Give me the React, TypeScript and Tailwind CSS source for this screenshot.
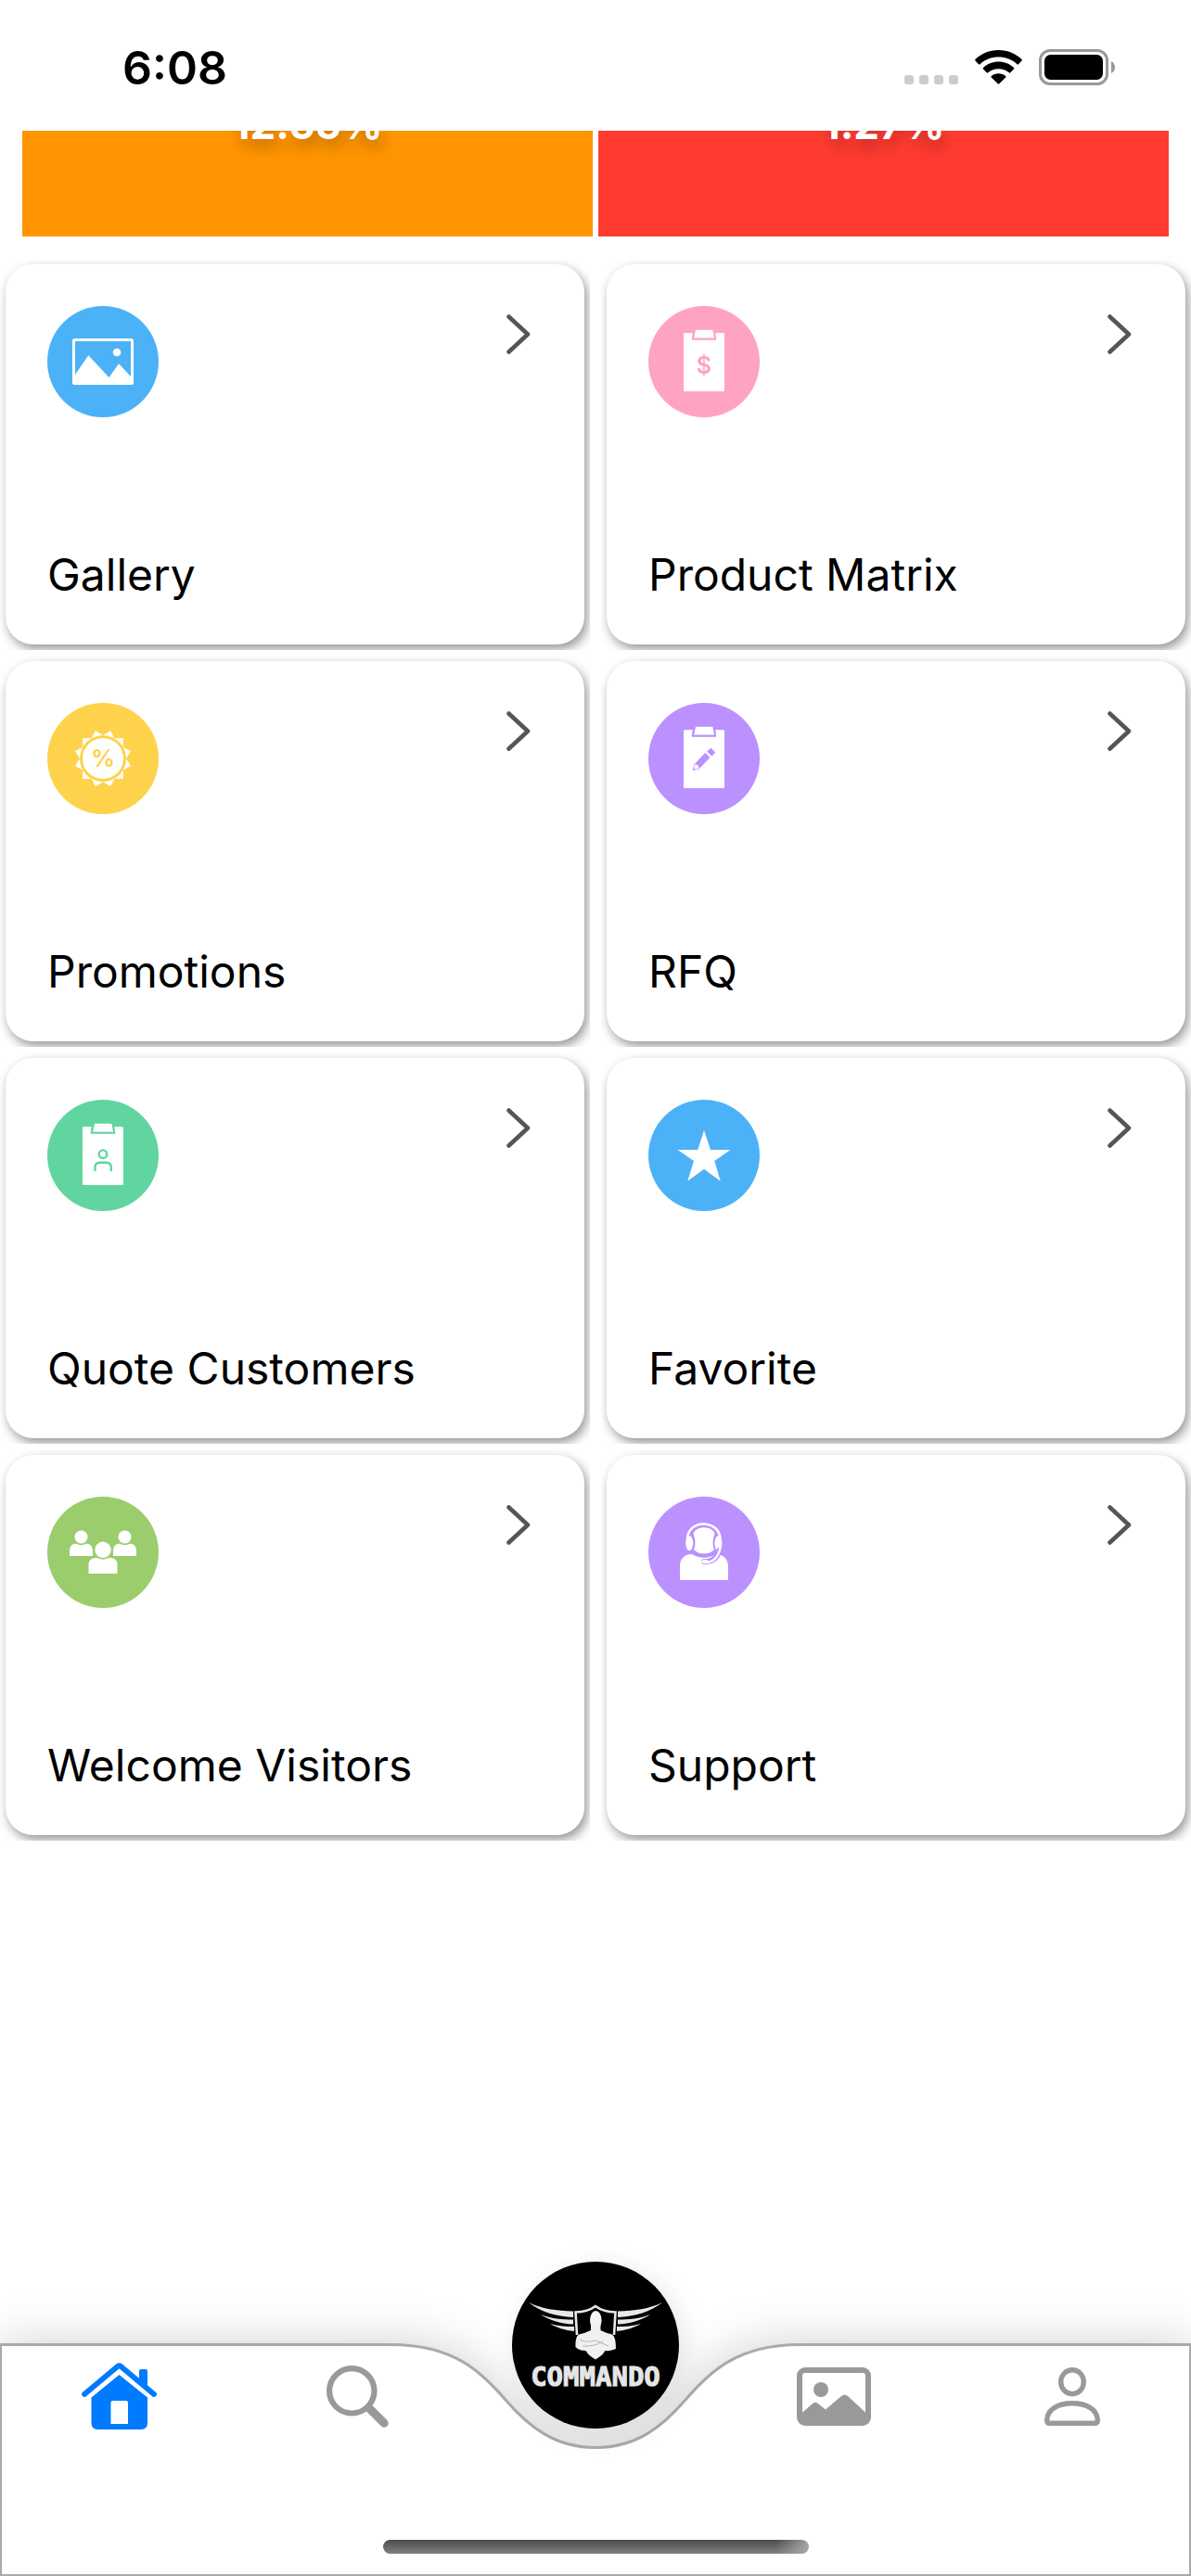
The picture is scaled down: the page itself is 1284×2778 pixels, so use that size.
import type { ReactNode } from "react";

const white = "#ffffff";

function Clipboard({ color, children }: { color: string; children: ReactNode }) {
  return (
    <>
      <rect x="38" y="29" width="44" height="63" rx="1.5" fill={white} />
      <path d="M47.8 28 H72.2 L73.4 36.8 H46.6 Z" fill={color} />
      <path d="M51 25.7 H69.3 L71 34.4 H49.2 Z" fill={white} />
      <g>{children}</g>
    </>
  );
}

function Person({
  x,
  y,
  r,
  w,
  h,
  color,
}: {
  x: number;
  y: number;
  r: number;
  w: number;
  h: number;
  color: string;
}) {
  const top = y + r;
  const left = x - w / 2;

  return (
    <>
      <path
        d={`M${left} ${top + h} V${top + 8} Q${left} ${top} ${left + 8} ${top} H${left + w - 8} Q${left + w} ${top} ${left + w} ${top + 8} V${top + h} Z`}
        fill={white}
      />
      <circle cx={x} cy={y} r={r + 1.8} fill={color} />
      <circle cx={x} cy={y} r={r} fill={white} />
    </>
  );
}

// 12 tips around the percent badge
const badgePoints = Array.from({ length: 24 }, (_, i) => {
  const radius = i % 2 === 0 ? 25 : 31;
  const angle = (i * 15 * Math.PI) / 180;

  return `${60 + radius * Math.sin(angle)},${60 - radius * Math.cos(angle)}`;
}).join(" ");

const tiles = [
  {
    label: "Gallery",
    color: "#4cb2f8",
    icon: (
      <>
        <rect x="27" y="35" width="66" height="50" rx="2.5" fill={white} />
        <path
          d="M30 38 H90 V76 L77 62.3 L66.5 77 L44.3 53.3 L30 74 Z"
          fill="#4cb2f8"
        />
        <circle cx="75" cy="50" r="4.3" fill={white} />
      </>
    ),
  },
  {
    label: "Product Matrix",
    color: "#fea3c4",
    icon: (
      <Clipboard color="#fea3c4">
        <text
          x="60"
          y="73"
          textAnchor="middle"
          fontSize="25"
          fontWeight="600"
          fill="#fea3c4"
        >
          $
        </text>
      </Clipboard>
    ),
  },
  {
    label: "Promotions",
    color: "#fed24b",
    icon: (
      <>
        <polygon points={badgePoints} fill={white} />
        <circle cx="60" cy="60" r="25" fill="#fed24b" />
        <circle cx="60" cy="60" r="22" fill={white} />
        <text
          x="60"
          y="69"
          textAnchor="middle"
          fontSize="26"
          fontWeight="600"
          fill="#fed24b"
        >
          %
        </text>
      </>
    ),
  },
  {
    label: "RFQ",
    color: "#bb90ff",
    icon: (
      <Clipboard color="#bb90ff">
        <g fill="#bb90ff">
          <path d="M61.3 53.7 L66.5 59 L54.5 71.2 L53.8 67.4 L49.8 66 Z" />
          <path d="M67.3 48.5 L72.2 53.5 L68.4 57.4 L63.2 52.5 Z" />
          <path
            d="M49.8 66 L48.4 72.4 L54.5 71.2"
            fill="none"
            stroke="#bb90ff"
            strokeWidth="0.8"
          />
          <path d="M48.6 70 L50.8 72 L48 72.8 Z" />
        </g>
      </Clipboard>
    ),
  },
  {
    label: "Quote Customers",
    color: "#60d5a0",
    icon: (
      <Clipboard color="#60d5a0">
        <g fill="none" stroke="#60d5a0" strokeWidth="2.4">
          <circle cx="60" cy="58.7" r="4.3" />
          <path d="M51.4 77 V73 Q51.4 67.7 56.5 67.7 H63.5 Q68.8 67.7 68.8 73 V77" />
        </g>
      </Clipboard>
    ),
  },
  {
    label: "Favorite",
    color: "#4cb2f8",
    icon: (
      <path
        d="M60 33 L67 54 H88.3 L71.3 66 L77.7 87.7 L60 74.7 L42.3 87.7 L49 66 L31.7 54 H53.3 Z"
        fill={white}
      />
    ),
  },
  {
    label: "Welcome Visitors",
    color: "#9bcd6d",
    icon: (
      <>
        <Person x={36.5} y={43.5} r={7} w={25} h={13.5} color="#9bcd6d" />
        <Person x={83.5} y={43.5} r={7} w={25} h={13.5} color="#9bcd6d" />
        <Person x={60} y={57.3} r={8.7} w={31} h={17} color="#9bcd6d" />
      </>
    ),
  },
  {
    label: "Support",
    color: "#bb90ff",
    icon: (
      <>
        <path
          d="M34 90 V75 C34 66 40 62 47 62 C55 67 65 67 73 62 C80 62 86 67 86 75 V90 Z"
          fill={white}
        />
        <path
          d="M48.5 40 C51 31 69 31 71.5 40 C69 46 69 53 71 57 C66 63 54 63 49 57 C51 53 51 46 48.5 40 Z"
          fill={white}
        />
        <path
          d="M42 46 C42 24 77 24 77.5 46"
          fill="none"
          stroke={white}
          strokeWidth="2.6"
        />
        <ellipse cx="44.2" cy="50.3" rx="4" ry="8" fill={white} />
        <ellipse cx="75.4" cy="50.3" rx="4" ry="8" fill={white} />
        <path
          d="M76.5 58 C74 67 68 70.5 60 70"
          fill="none"
          stroke="#bb90ff"
          strokeWidth="6"
          strokeLinecap="round"
        />
        <path
          d="M77.8 51 C77.5 63 71 70.5 63 71"
          fill="none"
          stroke={white}
          strokeWidth="2.4"
        />
        <ellipse cx="61" cy="70" rx="4" ry="2" fill={white} />
      </>
    ),
  },
];

const stats = [
  { value: "12.55%", className: "bg-[#ff9500]" },
  { value: "1.27%", className: "bg-[#ff3b30]" },
];

function StatusBar() {
  return (
    <header className="flex h-[141px] items-center justify-between pt-1 pr-[82px] pl-[132px]">
      <time className="text-[50px] leading-[60px] font-semibold">6:08</time>

      <div className="flex items-center gap-[18px]">
        <div className="flex gap-[6px] pt-[27px]">
          <span className="size-[10px] rounded-[3px] bg-[#cccccc]" />
          <span className="size-[10px] rounded-[3px] bg-[#cccccc]" />
          <span className="size-[10px] rounded-[3px] bg-[#cccccc]" />
          <span className="size-[10px] rounded-[3px] bg-[#cccccc]" />
        </div>

        <svg width="51" height="37" viewBox="0 0 51 37" aria-label="Wi-Fi">
          <path d="M25.5 0 C35.5 0 44.5 4 50.5 10 Q51.3 10.8 50.5 11.6 L47 15.2 Q46.2 16 45.4 15.2 C40 10.2 33 7.6 25.5 7.6 C18 7.6 11 10.2 5.6 15.2 Q4.8 16 4 15.2 L0.5 11.6 Q-0.3 10.8 0.5 10 C6.5 4 15.5 0 25.5 0 Z" />
          <path d="M25.5 12.6 C31.8 12.6 37.6 15 42 19 Q42.8 19.8 42 20.6 L38.3 24.3 Q37.5 25 36.7 24.3 C33.6 21.6 29.8 20.2 25.5 20.2 C21.2 20.2 17.4 21.6 14.3 24.3 Q13.5 25 12.7 24.3 L9 20.6 Q8.2 19.8 9 19 C13.4 15 19.2 12.6 25.5 12.6 Z" />
          <path d="M25.5 25.2 C28.4 25.2 31 26.2 33.2 27.9 Q34 28.7 33.2 29.5 L26.3 36.3 Q25.5 37 24.7 36.3 L17.8 29.5 Q17 28.7 17.8 27.9 C20 26.2 22.6 25.2 25.5 25.2 Z" />
        </svg>

        <svg width="82" height="39" viewBox="0 0 82 39" aria-label="Battery">
          <rect
            x="1.5"
            y="1.5"
            width="72"
            height="36"
            rx="10.5"
            fill="none"
            stroke="#999999"
            strokeWidth="3"
          />
          <rect x="6" y="6" width="63" height="27" rx="6.5" />
          <path d="M78 13 Q82 15 82 19.5 Q82 24 78 26 Z" fill="#999999" />
        </svg>
      </div>
    </header>
  );
}

function Emblem() {
  const wing = (
    <g fill="#e8e8e8">
      <path d="M18 44 C32 51 48 53 66 53.5 V60 C48 59 30 54 18 44 Z" />
      <path d="M31 57 C42 61.5 54 62.5 66 62.5 V67.5 C52 67 40 63 31 57 Z" />
      <path d="M41 67 C50 69.5 58 70 67 70 V75 C57 74 48 71 41 67 Z" />
    </g>
  );

  return (
    <svg width="180" height="180" viewBox="0 0 180 180" aria-hidden="true">
      {wing}
      <g transform="matrix(-1 0 0 1 180 0)">{wing}</g>
      <path
        d="M70 79 L68.5 54.5 Q82 54 90 48 Q98 54 111.5 54.5 L110 79"
        fill="none"
        stroke="#e8e8e8"
        strokeWidth="2.6"
      />
      <ellipse cx="90.3" cy="63" rx="6.3" ry="10" fill="#f4f4f4" />
      <path
        d="M85 68 H95.5 V74 Q101 77 108 78.5 Q112 81 112 94 Q104 97 100.5 96 Q98 101 90 105.5 Q82 101 79.5 96 Q72 96 68.5 92 Q68 81 72 78.5 Q79 77 85 74 Z"
        fill="#f0f0f0"
      />
      <path
        d="M73 84 Q81 88 90 85 L104 91 M76 91 Q88 92 98 86"
        fill="none"
        stroke="#b5b5b5"
        strokeWidth="1"
      />
      <text
        x="90"
        y="134"
        textAnchor="middle"
        fontSize="29"
        fontWeight="700"
        fill="#e6e6e6"
        stroke="#e6e6e6"
        strokeWidth="1"
        className="font-['DejaVu_Sans_Mono',monospace]"
      >
        COMMANDO
      </text>
    </svg>
  );
}

function TabBar() {
  return (
    <nav className="mt-auto grid h-[251px] shrink-0">
      {/* BACKGROUND */}

      <div className="col-start-1 row-start-1 flex drop-shadow-[0_0_26px_rgba(0,0,0,0.19)]">
        <div className="flex-1 border-t-[3px] border-b-2 border-l-2 border-[#a9a9a9] bg-white" />

        <svg width="440" height="251" viewBox="0 0 440 251">
          <path
            d="M0 1.5 C68 1.5 98 32 123 61 S176 112.5 220 112.5 S292 90 317 61 S372 1.5 440 1.5 V251 H0 Z"
            fill={white}
          />
          <path
            d="M0 1.5 C68 1.5 98 32 123 61 S176 112.5 220 112.5 S292 90 317 61 S372 1.5 440 1.5"
            fill="none"
            stroke="#a9a9a9"
            strokeWidth="3"
          />
          <path d="M0 250 H440" stroke="#a9a9a9" strokeWidth="2" />
        </svg>

        <div className="flex-1 border-t-[3px] border-r-2 border-b-2 border-[#a9a9a9] bg-white" />
      </div>

      {/* TABS */}

      <div className="relative col-start-1 row-start-1 flex flex-col justify-between pb-6">
        <div className="grid h-[114px] grid-cols-5 text-[#999999]">
          <button
            type="button"
            aria-label="Home"
            className="flex items-center justify-center text-[#007aff]"
          >
            <svg width="81" height="72" viewBox="0 0 81 72" fill="currentColor">
              <path
                d="M3 34 L38.7 4 Q40.5 2.6 42.3 4 L78 34"
                fill="none"
                stroke="currentColor"
                strokeWidth="5.8"
                strokeLinecap="round"
              />
              <path d="M62 23 V9 Q62 7 64 7 H69 Q71 7 71 9 V30 Z" />
              <path
                fillRule="evenodd"
                d="M40.5 13 L71 37.5 V65 Q71 72 64 72 H17.5 Q10.5 72 10.5 65 V37.5 Z M31.5 66 H50 V43 Q50 41 48 41 H33.5 Q31.5 41 31.5 43 Z"
              />
            </svg>
          </button>

          <button
            type="button"
            aria-label="Search"
            className="flex items-center justify-center"
          >
            <svg
              width="67"
              height="67"
              viewBox="0 0 67 67"
              fill="none"
              stroke="currentColor"
              strokeLinecap="round"
            >
              <circle cx="27.3" cy="27.3" r="24.2" strokeWidth="6.2" />
              <path d="M46.5 46.5 L62.2 62.2" strokeWidth="9" />
            </svg>
          </button>

          {/* the badge hangs over the top edge of the bar */}
          <div className="flex justify-center">
            <button
              type="button"
              aria-label="Commando"
              className="-mt-[88px] size-[180px] shrink-0 overflow-hidden rounded-full bg-black shadow-[6px_6px_30px_rgba(0,0,0,0.1)]"
            >
              <Emblem />
            </button>
          </div>

          <button
            type="button"
            aria-label="Pictures"
            className="flex items-center justify-center"
          >
            <svg width="80" height="63" viewBox="0 0 80 63" fill="currentColor">
              <rect
                x="3"
                y="3"
                width="74"
                height="57"
                rx="6"
                fill="none"
                stroke="currentColor"
                strokeWidth="6"
              />
              <circle cx="26" cy="24" r="8" />
              <path d="M5 49.5 L17.5 38.7 Q20 36.8 22.5 38.7 L31 45.5 L48 31 Q51.5 28 55 31 L75 49.5 V60 H5 Z" />
            </svg>
          </button>

          <button
            type="button"
            aria-label="Profile"
            className="flex items-center justify-center"
          >
            <svg
              width="60"
              height="63"
              viewBox="0 0 60 63"
              fill="none"
              stroke="currentColor"
              strokeWidth="5.4"
            >
              <ellipse cx="30" cy="15.7" rx="12.3" ry="13" />
              <path d="M2.7 57 C2.7 46 14 38.7 30 38.7 S57.3 46 57.3 57 Q57.3 60.3 54 60.3 H6 Q2.7 60.3 2.7 57 Z" />
            </svg>
          </button>
        </div>

        <div className="h-[15px] w-[459px] self-center rounded-full bg-[linear-gradient(100deg,transparent_92%,#a8a8a8),linear-gradient(#4c4c4c,#808080)]" />
      </div>
    </nav>
  );
}

export default function App() {
  return (
    <div className="flex min-h-screen flex-col overflow-hidden bg-white font-[Inter,sans-serif] text-black">
      <StatusBar />

      <main>
        {/* STATS */}

        <section className="mb-6 grid grid-cols-2 gap-[6px] px-6">
          {stats.map((stat) => (
            <div
              key={stat.value}
              className={`h-[114px] overflow-hidden text-center ${stat.className}`}
            >
              {/* scrolled half under the status bar */}
              <p className="-mt-[29px] text-[44px] leading-[44px] font-bold text-white [text-shadow:3px_9px_15px_rgba(0,0,0,0.3)]">
                {stat.value}
              </p>
            </div>
          ))}
        </section>

        {/* MENU */}

        <section className="grid grid-cols-2 gap-x-3 gap-y-[6px]">
          {tiles.map((tile) => (
            <div key={tile.label} className="overflow-hidden p-[6px]">
              <button
                type="button"
                className="flex h-[410px] w-full flex-col justify-between rounded-[30px] bg-white p-[45px] text-left shadow-[3px_5px_12px_rgba(0,0,0,0.42)]"
              >
                <span className="flex w-full items-start justify-between">
                  <svg
                    width="120"
                    height="120"
                    viewBox="0 0 120 120"
                    aria-hidden="true"
                  >
                    <circle cx="60" cy="60" r="60" fill={tile.color} />
                    {tile.icon}
                  </svg>

                  <svg
                    width="26"
                    height="43"
                    viewBox="0 0 26 43"
                    className="mt-[9px] mr-[13px]"
                    aria-hidden="true"
                  >
                    <path
                      d="M2.5 2.5 L23 21.5 L2.5 40.5"
                      fill="none"
                      stroke="#555555"
                      strokeWidth="4.5"
                      strokeLinecap="round"
                      strokeLinejoin="round"
                    />
                  </svg>
                </span>

                <span className="text-[48px] leading-[60px]">{tile.label}</span>
              </button>
            </div>
          ))}
        </section>
      </main>

      <TabBar />
    </div>
  );
}
